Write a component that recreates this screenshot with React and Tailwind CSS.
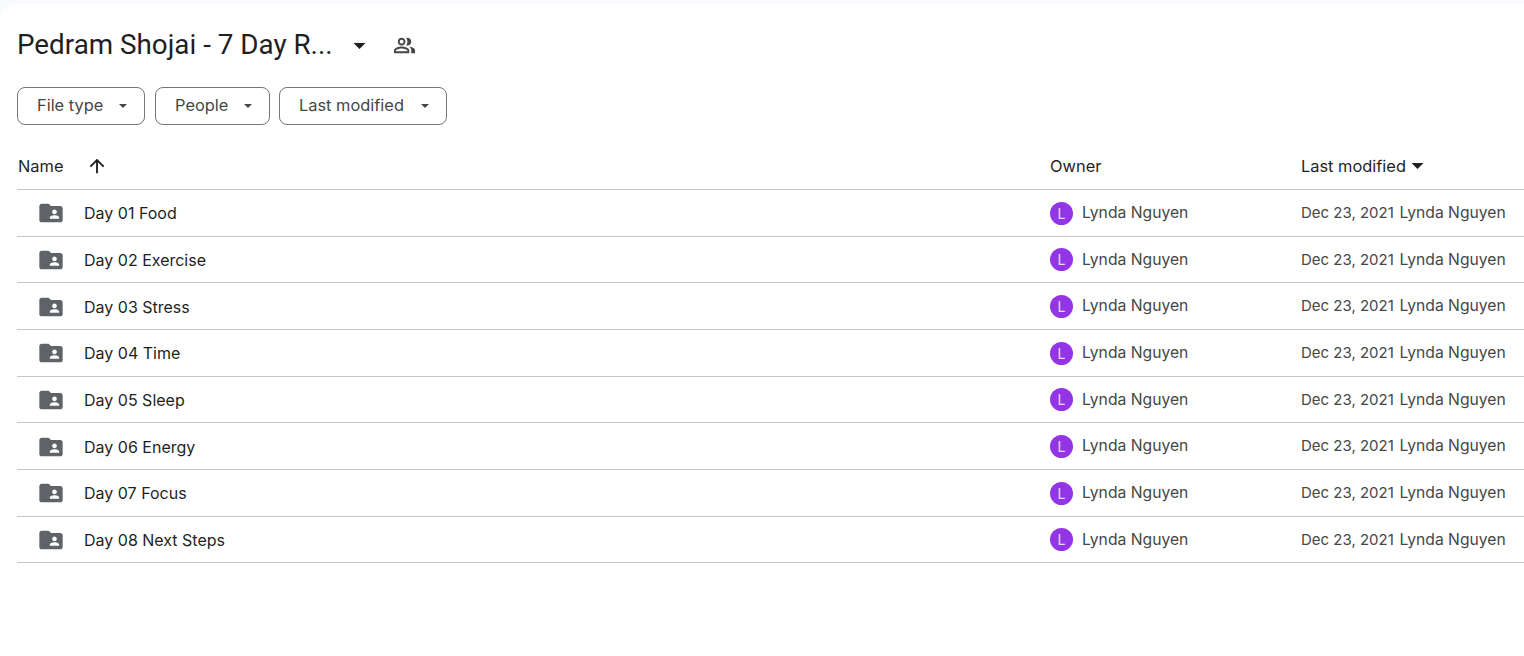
const font = { fontFamily: '"Roboto", "Liberation Sans", sans-serif' };
const body = { fontFamily: '"Inter", "Liberation Sans", sans-serif' };

const rows = ["Day 01 Food","Day 02 Exercise","Day 03 Stress","Day 04 Time","Day 05 Sleep","Day 06 Energy","Day 07 Focus","Day 08 Next Steps"];

function Caret({ className }) {
  return (
    <svg viewBox="0 0 10 5" className={className} fill="currentColor"><path d="M0 0h10L5 5z" /></svg>
  );
}

function FolderShared() {
  return (
    <svg width="28" height="28" viewBox="0 0 24 24" fill="#5f6368" className="shrink-0 mt-[1px]">
      <path d="M20 6h-8l-2-2H4c-1.1 0-2 .9-2 2v12c0 1.1.9 2 2 2h16c1.1 0 2-.9 2-2V8c0-1.1-.9-2-2-2zm-5 3c1.1 0 2 .9 2 2s-.9 2-2 2-2-.9-2-2 .9-2 2-2zm4 8h-8v-1c0-1.33 2.67-2 4-2s4 .67 4 2v1z" />
    </svg>
  );
}

function PeopleOutline() {
  return (
    <svg width="23" height="23" viewBox="0 0 24 24" fill="#444746">
      <path d="M16.67 13.13C18.04 14.06 19 15.32 19 17v3h4v-3c0-2.18-3.57-3.47-6.33-3.87zM15 12c2.21 0 4-1.79 4-4s-1.79-4-4-4c-.47 0-.91.1-1.33.24C14.5 5.27 15 6.58 15 8s-.5 2.73-1.33 3.76c.42.14.86.24 1.33.24zM9 12c2.21 0 4-1.79 4-4s-1.79-4-4-4-4 1.79-4 4 1.79 4 4 4zm0-6c1.1 0 2 .9 2 2s-.9 2-2 2-2-.9-2-2 .9-2 2-2zm0 7c-2.67 0-8 1.34-8 4v3h16v-3c0-2.66-5.33-4-8-4zm6 5H3v-.99C3.2 16.29 6.3 15 9 15s5.8 1.29 6 2v1z" />
    </svg>
  );
}

function Chip({ label, width }) {
  return (
    <div className={`h-[38px] ${width} border border-[#747775] rounded-lg flex items-center justify-between pl-[19px] pr-[17px] text-[#444746] text-[16.4px]`}>
      <span className="-mt-[1px]">{label}</span>
      <Caret className="w-[8px] h-[4px] text-[#444746]" />
    </div>
  );
}

export default function App() {
  return (
    <div style={font} className="w-[1524px] h-[656px] bg-[#f8fafd] overflow-hidden">
      <div className="mt-[4px] h-[652px] bg-white rounded-tl-2xl pl-[17px]">
        <div className="h-[83px] flex items-center">
          <h1 className="text-[27.8px] font-normal text-[#1f1f1f] w-[336px] pb-[2px]">Pedram Shojai - 7 Day R...</h1>
          <Caret className="w-[13px] h-[6px] text-[#1f1f1f]" />
          <div className="ml-[27px] -mt-[1px]"><PeopleOutline /></div>
        </div>
        <div style={body} className="flex">
          <Chip label="File type" width="w-[128px]" />
          <div className="ml-[10px]"><Chip label="People" width="w-[115px]" /></div>
          <div className="ml-[9px]"><Chip label="Last modified" width="w-[168px]" /></div>
        </div>
        <div style={body} className="mt-[14px] h-[51px] flex items-center border-b border-[#c7c7c7] text-[16.4px] text-[#1f1f1f] pt-[4px]">
          <div className="w-[1033px] flex items-center pl-[1px]">
            <span>Name</span>
            <svg width="22" height="22" viewBox="0 0 24 24" fill="#1f1f1f" className="ml-[23px]">
              <path d="M4 12l1.41 1.41L11 7.83V20h2V7.83l5.58 5.59L20 12l-8-8-8 8z" />
            </svg>
          </div>
          <div className="w-[251px]">Owner</div>
          <div className="flex items-center gap-[5px]">
            <span>Last modified</span>
            <Caret className="w-[13px] h-[6px] text-[#1f1f1f]" />
          </div>
        </div>
        {rows.map((r) => (
          <div key={r} style={body} className="h-[46.67px] flex items-center border-b border-[#c7c7c7] text-[16px]">
            <div className="w-[1033px] flex items-center pl-[20px]">
              <FolderShared />
              <span className="ml-[19px] text-[#1f1f1f] pt-[1px]">{r}</span>
            </div>
            <div className="w-[251px] flex items-center text-[#444746]">
              <span className="w-[23px] h-[23px] mt-[1px] rounded-full bg-[#9334e6] text-white/80 text-[14px] flex items-center justify-center shrink-0">L</span>
              <span className="ml-[9px] text-[15.7px]">Lynda Nguyen</span>
            </div>
            <div className="text-[#444746] whitespace-nowrap flex items-baseline">
              <span className="text-[15px] w-[98.4px]">Dec 23, 2021</span>
              <span className="text-[15.7px]">Lynda Nguyen</span>
            </div>
          </div>
        ))}
      </div>
    </div>
  );
}
